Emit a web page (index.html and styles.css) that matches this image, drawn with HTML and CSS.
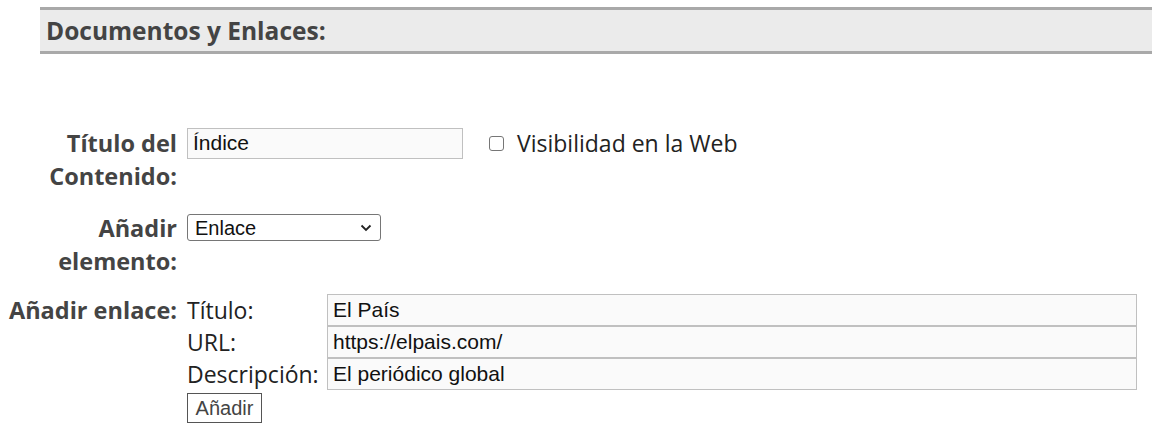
FILE: index.html
```html
<!DOCTYPE html>
<html>
	<head>
		<meta charset="UTF-8">
		<title>Documentos y Enlaces</title>
		<link rel="stylesheet" href="styles.css">
	</head>
	<body>
		<h2 class="section-title">Documentos y Enlaces:</h2>
		<form class="doc-form">
			<div class="row row-title">
				<label class="lbl" for="titulo">Título del Contenido:</label>
				<div class="field">
					<input class="txt txt-short" id="titulo" type="text" value="Índice">
					<label class="check"><input type="checkbox"><span>Visibilidad en la Web</span></label>
				</div>
			</div>
			<div class="row row-add">
				<label class="lbl" for="tipo">Añadir elemento:</label>
				<div class="field">
					<span class="select-wrap">
						<select id="tipo" class="sel">
							<option>Enlace</option>
							<option>Documento</option>
						</select>
						<svg class="chev" width="12" height="8" viewBox="0 0 12 8"><path d="M1.5 1.5 L6 6 L10.5 1.5" fill="none" stroke="#222" stroke-width="1.8"/></svg>
					</span>
				</div>
			</div>
			<div class="row row-link">
				<span class="lbl nowrap">Añadir enlace:</span>
				<div class="field">
					<div class="link-grid">
						<label class="sub-lbl" for="l-tit">Título:</label>
						<input class="txt" id="l-tit" type="text" value="El País">
						<label class="sub-lbl" for="l-url">URL:</label>
						<input class="txt" id="l-url" type="text" value="https://elpais.com/">
						<label class="sub-lbl" for="l-desc">Descripción:</label>
						<input class="txt" id="l-desc" type="text" value="El periódico global">
					</div>
					<button type="button" class="btn">Añadir</button>
				</div>
			</div>
		</form>
	</body>
</html>
```

FILE: styles.css
```css
*{padding: 0;margin: 0;box-sizing: border-box;}
body{
	font-family: "Open Sans", "Noto Sans", sans-serif;
	font-size: 23px;
	color: #222;
	background: #fff;
	padding-top: 7px;
	overflow: hidden;
}
.section-title{
	margin-left: 40px;
	height: 47px;
	padding-left: 6px;
	border-top: 3px solid #a9a9a9;
	border-bottom: 3px solid #a9a9a9;
	background: #ebebeb;
	font-size: 24.5px;
	font-weight: bold;
	line-height: 41px;
	color: #444;
	white-space: nowrap;
}
.doc-form{
	padding: 73px 0 0 8px;
}
.row{
	display: flex;
	align-items: flex-start;
	gap: 10px;
}
.row-title{margin-bottom: 19px;}
.row-add{margin-bottom: 16px;}
.lbl{
	width: 169px;
	flex: none;
	text-align: right;
	font-size: 23.5px;
	font-weight: bold;
	color: #444;
	line-height: 33px;
}
.nowrap{white-space: nowrap;}
.field{
	display: flex;
	align-items: flex-start;
	flex-wrap: wrap;
	flex: 1;
	padding-right: 15px;
}
.row-title .field{align-items: center;gap: 26px;}
.txt{
	height: 32px;
	padding: 0 5px;
	border: 1px solid #c0c0c0;
	background: #fafafa;
	font-family: "Liberation Sans", Arial, sans-serif;
	font-size: 21px;
	color: #111;
	outline: none;
}
.txt-short{width: 276px;height: 31px;}
.check{
	display: flex;
	align-items: center;
	gap: 13px;
	color: #222;
}
.check input{
	appearance: none;
	-webkit-appearance: none;
	width: 15px;height: 15px;
	border: 1px solid #767676;
	border-radius: 3px;
	background: #fff;
}
.select-wrap{
	position: relative;
	display: flex;
	margin-top: 2px;
}
.sel{
	appearance: none;
	-webkit-appearance: none;
	display: block;
	width: 194px;height: 27px;
	padding: 0 28px 0 7px;
	border: 1px solid #767676;
	border-radius: 3px;
	background: #fff;
	font-family: "Liberation Sans", Arial, sans-serif;
	font-size: 20px;
	color: #111;
}
.chev{
	position: absolute;
	right: 9px;top: 10px;
	pointer-events: none;
}
.link-grid{
	display: grid;
	grid-template-columns: 140px 810px;
	width: 100%;
}
.sub-lbl{
	line-height: 32px;
	color: #222;
}
.btn{
	margin-top: 3px;
	width: 75px;height: 30px;
	border: 1px solid #555;
	background: #fff;
	font-family: "Liberation Sans", Arial, sans-serif;
	font-size: 20px;
	color: #444;
}
```
